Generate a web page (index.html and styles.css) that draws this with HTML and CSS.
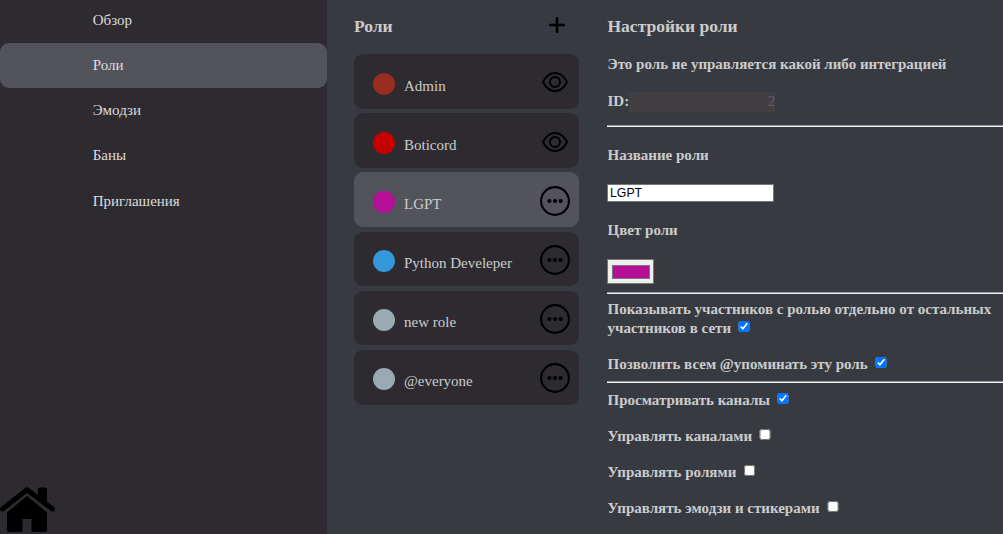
FILE: index.html
```html
<!DOCTYPE html>
<html lang="ru">
<head>
<meta charset="utf-8">
<title>Роли</title>
<link rel="stylesheet" href="styles.css">
</head>
<body>
<svg class="symbols" width="0" height="0">
  <symbol id="eye" viewBox="0 0 26 20"><path d="M1 10C4 4 8.200 1 13 1s9 3 12 9c-3 6-7.200 9-12 9S4 16 1 10Z"/><circle cx="13" cy="10" r="5"/></symbol>
  <symbol id="more" viewBox="0 0 30 30"><circle cx="15" cy="15" r="13.900"/><g fill="#000" stroke="none"><circle cx="9.400" cy="15" r="2.100"/><circle cx="15" cy="15" r="2.100"/><circle cx="20.600" cy="15" r="2.100"/></g></symbol>
</svg>
<div class="app">
  <aside class="sidebar">
    <nav class="menu">
      <a class="menu-item">Обзор</a>
      <a class="menu-item active">Роли</a>
      <a class="menu-item">Эмодзи</a>
      <a class="menu-item">Баны</a>
      <a class="menu-item">Приглашения</a>
    </nav>
    <svg class="home" viewBox="0 0 56 46"><path d="M7 25.500 27 9l20 16.500V43q0 2-2 2H31.500V32h-9v13H9q-2 0-2-2Z"/><path d="M38 10V2q0-1.500 1.500-1.500h6Q47 .500 47 2v16Z"/><path d="M2.500 22 27 2.800 52.500 22" fill="none" stroke="#000" stroke-width="5" stroke-linecap="round" stroke-linejoin="round"/></svg>
  </aside>
  <section class="roles">
    <header class="roles-head">
      <h3 class="title">Роли</h3>
      <svg class="plus" viewBox="0 0 16 16"><path d="M8 1.300v13.400M1.300 8h13.400"/></svg>
    </header>
    <div class="role"><span class="dot red-dark"></span><span class="name">Admin</span><svg class="icon eye"><use href="#eye"/></svg></div>
    <div class="role"><span class="dot red"></span><span class="name">Boticord</span><svg class="icon eye"><use href="#eye"/></svg></div>
    <div class="role active"><span class="dot magenta"></span><span class="name">LGPT</span><svg class="icon more"><use href="#more"/></svg></div>
    <div class="role"><span class="dot blue"></span><span class="name">Python Develeper</span><svg class="icon more"><use href="#more"/></svg></div>
    <div class="role"><span class="dot gray"></span><span class="name">new role</span><svg class="icon more"><use href="#more"/></svg></div>
    <div class="role"><span class="dot gray"></span><span class="name">@everyone</span><svg class="icon more"><use href="#more"/></svg></div>
  </section>
  <main class="settings">
    <h3 class="title">Настройки роли</h3>
    <p class="managed">Это роль не управляется какой либо интеграцией</p>
    <p class="role-id">ID:<span class="masked">2</span></p>
    <div class="rule"></div>
    <p class="label-name">Название роли</p>
    <input class="name-input" type="text" value="LGPT">
    <p class="label-color">Цвет роли</p>
    <div class="color-input"><div class="swatch"></div></div>
    <div class="rule"></div>
    <p class="option wrapped">Показывать участников с ролью отдельно от остальных участников в сети <input class="check" type="checkbox" checked></p>
    <p class="option last">Позволить всем @упоминать эту роль <input class="check" type="checkbox" checked></p>
    <div class="rule"></div>
    <p class="option">Просматривать каналы <input class="check" type="checkbox" checked></p>
    <p class="option">Управлять каналами <input class="check" type="checkbox"></p>
    <p class="option">Управлять ролями <input class="check" type="checkbox"></p>
    <p class="option">Управлять эмодзи и стикерами <input class="check" type="checkbox"></p>
  </main>
</div>
</body>
</html>
```
FILE: styles.css
```css
* { box-sizing: border-box; }
body {
  margin: 0;
  font: 15px/18px "Liberation Serif", serif;
  color: #ccc;
  background: #383a41;
  overflow: hidden;
}
.symbols { position: absolute; }
.app { display: grid; grid-template-columns: 327px 280px 396px; height: 534px; }
.sidebar {
  display: flex;
  flex-direction: column;
  justify-content: space-between;
  background: #2d2b30;
  color: #ddd;
}
.menu-item {
  display: block;
  height: 45.2px;
  padding: 13px 0 0 92.7px;
  border-radius: 9px;
}
.menu-item:first-child { height: 43px; padding-top: 11px; }
.menu-item.active { background: #53535c; }
.home { width: 56px; height: 46px; margin-bottom: 1.6px; }
.title { margin: 0; font-size: 17.5px; line-height: 18px; }
.roles { padding: 17px 28px 0 27px; }
.roles-head { display: flex; justify-content: space-between; height: 37px; padding-right: 14px; }
.plus { width: 16px; height: 16px; fill: none; stroke: #000; stroke-width: 2.6; stroke-linecap: round; }
.role {
  display: flex;
  align-items: center;
  height: 54.8px;
  margin-bottom: 4.38px;
  padding: 0 9px 0 19px;
  border-radius: 9px;
  background: #2d2b30;
}
.role.active { background: #53535c; }
.dot { width: 22px; height: 22px; margin-top: 4.4px; border-radius: 50%; }
.red-dark { background: #992d22; }
.red { background: #c60000; }
.magenta { background: #b50f98; }
.blue { background: #3498db; }
.gray { background: #99aab5; }
.name { margin: 8.4px auto 0 9px; }
.icon { fill: none; stroke: #000; stroke-width: 2; }
.eye { width: 26px; height: 20px; margin: 1.9px 2px 0 0; }
.more { width: 30px; height: 30px; margin-top: 2px; stroke-width: 2.1; }
.settings { padding-top: 17px; font-weight: bold; }
.settings p, .settings .title { margin: 0; padding-left: .5px; }
.settings .managed { margin-top: 20px; }
.settings .role-id { display: flex; margin: 19px 0 14px; height: 19px; }
.masked {
  width: 146px;
  height: 20px;
  padding-right: 0;
  background: #423f43;
  color: #625f63;
  font-weight: normal;
  text-align: right;
}
.rule { height: 2px; border-top: 1px solid #999; background: #f0f0f0; }
.settings .label-name { margin-top: 19px; }
.name-input {
  display: block;
  width: 167px;
  height: 18px;
  margin: 20px 0 19px;
  padding: 0 2px;
  border: 1px solid #767676;
  background: #fff;
  color: #000;
  font: 12.3px "Liberation Sans", sans-serif;
}
.color-input {
  width: 47px;
  height: 25px;
  margin: 20px 0 8px;
  padding: 5px 3px 5px 4px;
  border: 1px solid #767676;
  background: #efefef;
}
.swatch { height: 14px; border: 1px solid #777; background: #b50f98; }
.settings .option { margin: 8px 0 18px; line-height: 18px; }
.settings .option + .option { margin-top: 0; }
.settings .option.wrapped { margin: 6px 0 17px; line-height: 19px; }
.settings .option.last { margin-bottom: 8px; }
.check { width: 11.7px; height: 11.7px; margin: 0 0 0 3.5px; vertical-align: .6px; }
```
